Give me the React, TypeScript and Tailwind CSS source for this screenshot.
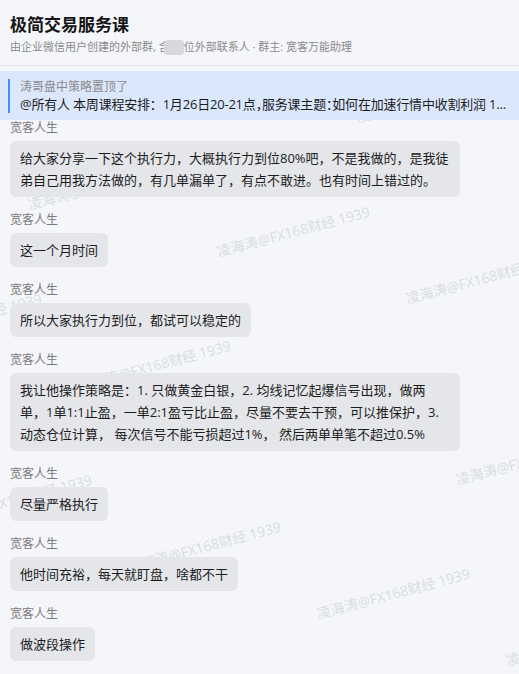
import React from 'react';

const FONT = '"Open Sans", "Noto Sans CJK SC", sans-serif';
const WATERMARK = '凌海涛@FX168财经 1939';

interface Message {
  name: string;
  lines: string[];
}

const messages: Message[] = [
  {
    name: '宽客人生',
    lines: [
      '给大家分享一下这个执行力，大概执行力到位80%吧，不是我做的，是我徒',
      '弟自己用我方法做的，有几单漏单了，有点不敢进。也有时间上错过的。',
    ],
  },
  { name: '宽客人生', lines: ['这一个月时间'] },
  { name: '宽客人生', lines: ['所以大家执行力到位，都试可以稳定的'] },
  {
    name: '宽客人生',
    lines: [
      '我让他操作策略是：1. 只做黄金白银，2. 均线记忆起爆信号出现，做两',
      '单，1单1:1止盈，一单2:1盈亏比止盈，尽量不要去干预，可以推保护，3.',
      '动态仓位计算， 每次信号不能亏损超过1%， 然后两单单笔不超过0.5%',
    ],
  },
  { name: '宽客人生', lines: ['尽量严格执行'] },
  { name: '宽客人生', lines: ['他时间充裕，每天就盯盘，啥都不干'] },
  { name: '宽客人生', lines: ['做波段操作'] },
];

// watermark tiles, page coordinates of the first glyph's bottom-left
function watermarkPoints() {
  const pts: { x: number; y: number }[] = [];
  for (let i = -4; i <= 4; i++) {
    for (let j = -3; j <= 4; j++) {
      const x = 30 + 189 * i + 50 * j;
      const y = 212 + 47 * i + 181 * j;
      if (x > -180 && x < 519 && y > 110 && y < 700) pts.push({ x, y: y - 120 });
    }
  }
  return pts;
}

function Bubble({ msg }: { msg: Message }) {
  const multi = msg.lines.length > 1;
  return (
    <div className="flex flex-col items-start">
      <div className="text-[12px] leading-4 text-[#7a7a7a]">{msg.name}</div>
      <div
        className={`mt-[5px] rounded-md bg-[#e4e6ea] px-[10px] py-[6px] text-[13px] leading-[22px] text-[#1c1c1c] ${
          multi ? 'w-[450px]' : ''
        }`}
      >
        {msg.lines.map((line, i) => (
          <span key={i} className="block whitespace-pre">
            {line}
          </span>
        ))}
      </div>
    </div>
  );
}

export default function App() {
  const marks = watermarkPoints();
  const half = "[font-feature-settings:'halt']";

  return (
    <div className="min-h-screen w-full bg-[#f5f6fa]" style={{ fontFamily: FONT }}>
      <div className="border-b border-[#e3e4e8] px-[10px] pt-[13px] pb-[10px]">
        <h1 className="text-[17px] leading-6 font-bold text-[#141414]">极简交易服务课</h1>
        <p className="mt-[2px] flex items-center whitespace-pre text-[11px] leading-4 text-[#8a8a8a]">
          <span>由企业微信用户创建的外部群, 含</span>
          <span className="-ml-[6px] inline-block h-[15px] w-[20px] rounded-sm bg-[#d6d8dc] blur-[0.5px]" />
          <span>位外部联系人 · 群主: 宽客万能助理</span>
        </p>
      </div>

      <div className="mt-[5px] bg-[#dbe8fc] px-2 pt-2 pb-[7px]">
        <div className="border-l-2 border-[#4a8cf0] pl-[10px]">
          <div className="text-[12px] leading-4 text-[#8a8a8a]">涛哥盘中策略置顶了</div>
          <div className="overflow-hidden whitespace-pre text-[13px] leading-[18px] tracking-[-0.2px] text-[#1c1c1c]">
            @所有人 本周课程安排：1月26日20-21点<span className={half}>，</span>服务课主题
            <span className={half}>：</span>如何在加速行情中收割利润 1...
          </div>
        </div>
      </div>

      <div className="relative overflow-hidden px-[10px]">
        <div className="pointer-events-none absolute inset-0 z-0">
          {marks.map((p, i) => (
            <span
              key={i}
              className="absolute origin-bottom-left -rotate-[15deg] whitespace-nowrap text-[14px] leading-[14px] text-[#d9dce3]"
              style={{ left: p.x, top: p.y - 14 }}
            >
              {WATERMARK}
            </span>
          ))}
        </div>
        <div className="relative z-10 flex flex-col gap-[15px] pb-[13px]">
          {messages.map((m, i) => (
            <Bubble key={i} msg={m} />
          ))}
        </div>
      </div>
    </div>
  );
}
